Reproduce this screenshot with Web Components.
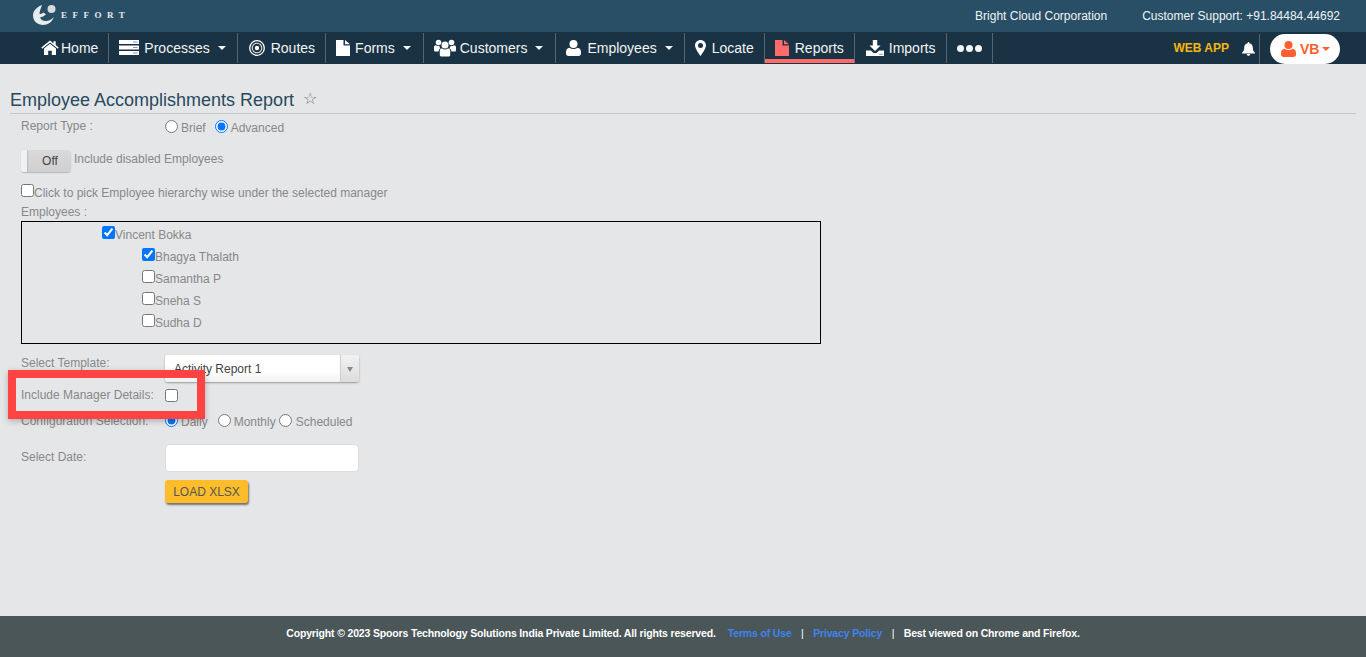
<!DOCTYPE html>
<html>
<head>
<meta charset="utf-8">
<title>Employee Accomplishments Report</title>
<style>
  html, body { margin: 0; height: 100%; }
  body { font-family: "Liberation Sans", Arial, sans-serif; background: #e5e6e8; }
  effort-app { height: 657px; }
</style>
</head>
<body>
<effort-app></effort-app>

<script>
const ICONS = {
  home: '<svg width="18" height="15" viewBox="0 0 18 15"><path fill="#fff" d="M9 0.5 0.3 7.6l.9 1.1L9 2.4l7.8 6.3.9-1.1-3-2.5V1.2h-2.2v2.3z"/><path fill="#fff" d="M3 8.6 9 3.8l6 4.8V15h-4.2v-4.3H7.2V15H3z"/></svg>',
  processes: '<svg width="20" height="15" viewBox="0 0 20 15"><path fill="#fff" d="M0 0h20v4H0zM0 5.5h20v4H0zM0 11h20v4H0z"/><path fill="#8a9aa5" d="M14 1.5h4.500v1H14zM14 7h4.500v1H14zM14 12.500h4.500v1H14z"/></svg>',
  routes: '<svg width="16" height="16" viewBox="0 0 16 16"><g fill="none" stroke="#fff"><circle cx="8" cy="8" r="7.300" stroke-width="1.300"/><circle cx="8" cy="8" r="4.800" stroke-width="1.100" stroke-opacity=".85"/></g><circle cx="8" cy="8" r="2.200" fill="#fff"/></svg>',
  file: c => `<svg width="14" height="16" viewBox="0 0 14 16"><path fill="${c}" d="M0 0h7.500v5.500H14V16H0zM9 0l5 4.200H9z"/></svg>`,
  customers: '<svg width="22" height="18" viewBox="0 0 22 18"><g fill="#fff"><circle cx="11" cy="6" r="3.500"/><path d="M5.800 11.500c0-1.500 1.300-2 2.300-2 1.700 1.300 4.100 1.300 5.800 0 1 0 2.300.5 2.300 2V16c0 1-1 1.500-2 1.500H7.800c-1 0-2-.5-2-1.500z"/><circle cx="4.500" cy="3.500" r="2.800"/><circle cx="17.500" cy="3.500" r="2.800"/><path d="M0 8c0-1 1-1.700 2-1.800 1.200.9 2.400 1 3.500.7C5.400 8 6 9 6.700 9.300 5.200 10 4.600 11 4.600 12.500H1.500C.6 12.500 0 12 0 11.200zM22 8c0-1-1-1.700-2-1.800-1.200.9-2.400 1-3.500.7-.1 1.100-.7 2.100-1.400 2.400 1.500.7 2.300 1.700 2.300 3.200h3.100c.9 0 1.500-.5 1.500-1.300z"/></g></svg>',
  user: c => `<svg width="15" height="16" viewBox="0 0 15 16"><g fill="${c}"><circle cx="7.500" cy="4" r="4"/><path d="M0 12c0-2.500 1.500-4 3.300-4.200 2.500 1.700 5.900 1.700 8.400 0C13.500 8 15 9.500 15 12v1.500c0 1.500-1 2.500-2.500 2.500h-10C1 16 0 15 0 13.500z"/></g></svg>`,
  marker: '<svg width="11" height="16" viewBox="0 0 11 16"><path fill="#fff" fill-rule="evenodd" d="M5.500 0C2.400 0 0 2.400 0 5.500c0 2.600 3.500 7.800 5.500 10.500C7.500 13.300 11 8.100 11 5.500 11 2.400 8.600 0 5.500 0zm0 3a2.500 2.500 0 1 1 0 5 2.500 2.500 0 0 1 0-5z"/></svg>',
  download: '<svg width="18" height="16" viewBox="0 0 18 16"><path fill="#fff" d="M6.800 0h4.400v5.500h3.300L9 11 3.500 5.500h3.300z"/><path fill="#fff" d="M0 10.500h4.800L7.500 13h3l2.700-2.500H18V16H0z"/><path fill="#1a3344" d="M13.500 13.800h1v1h-1zM15.500 13.800h1v1h-1z"/></svg>',
  bell: '<svg width="13" height="14" viewBox="0 0 13 14"><path fill="#fff" d="M6.500 0c.5 0 .8.300.8.800v.5c2.200.4 3.500 2 3.500 4.200 0 2.700.7 3.900 2.200 5.300v.7H0v-.7c1.500-1.400 2.200-2.600 2.200-5.300 0-2.200 1.300-3.800 3.500-4.200V.8c0-.5.300-.8.800-.8zM4.800 12h3.400c0 1.100-.7 1.800-1.700 1.800S4.800 13.100 4.800 12z"/></svg>'
};

// top strip with the logo and the company details
class EffortTopbar extends HTMLElement {
  constructor() {
    super();
    this.attachShadow({ mode: 'open' });
    this.shadowRoot.innerHTML = `
      <style>
        :host { display: flex; align-items: center; height: 32px; background: #284f66; color: #f0f3f5; font-size: 12px; padding: 0 26px 0 33px; }
        .logo { display: flex; align-items: center; gap: 5px; margin-top: -3px; }
        .word { font: bold 9px "Liberation Serif", serif; letter-spacing: 5.5px; color: #e6ebee; margin-top: 1px; }
        .org { margin-left: auto; }
        .support { margin-left: 35px; }
      </style>
      <div class="logo">
        <svg width="23" height="22" viewBox="0 0 23 22">
          <circle cx="18.500" cy="5" r="4" fill="#d5dcdf"/>
          <path fill="#e6ebee" d="M9 1C4 3 0 6.500 0 11.500 0 17.500 5 21 10 21c5 0 9-3 11-8-3 3-6 4.500-9 4-3-.5-4.500-2-5-3.500 2-.5 4-1.500 6-3l-2.500-2C9 9.500 7.500 10 6.500 10 6.500 7 8 4 9 1z"/>
        </svg>
        <span class="word">EFFORT</span>
      </div>
      <span class="org">Bright Cloud Corporation</span>
      <span class="support">Customer Support: +91.84484.44692</span>`;
  }
}

// one cell of the dark menu, icon and caret are optional
class NavItem extends HTMLElement {
  constructor() {
    super();
    this.attachShadow({ mode: 'open' });
  }
  connectedCallback() {
    const iconKey = this.getAttribute('icon');
    const active = this.hasAttribute('active');
    let icon = ICONS[iconKey] || '';
    if (typeof icon === 'function') icon = icon(active ? '#ff6b6b' : '#fff');
    const gap = this.getAttribute('gap') || '6';
    this.shadowRoot.innerHTML = `
      <style>
        :host { display: flex; align-items: center; height: 30px; margin-top: 1px; padding: 0 10px 1px 10px; box-sizing: border-box; border-right: 1px solid #56666f; color: #f2f4f5; font-size: 14px; white-space: nowrap; }
        :host([active]) { border-bottom: 4px solid #ff6b6b; padding-top: 3px; padding-bottom: 0; }
        .icon { display: flex; margin-right: ${gap}px; }
        .caret { width: 0; height: 0; border: 4px solid transparent; border-top-color: #f2f4f5; border-bottom: 0; margin-left: 8px; margin-right: 1px; }
      </style>
      <span class="icon">${icon}</span><slot></slot>${this.hasAttribute('caret') ? '<span class="caret"></span>' : ''}`;
  }
}

class EffortNav extends HTMLElement {
  constructor() {
    super();
    this.attachShadow({ mode: 'open' });
    this.shadowRoot.innerHTML = `
      <style>
        :host { display: flex; height: 32px; background: #1a3344; padding-left: 31px; box-sizing: border-box; }
        .right { margin-left: auto; display: flex; align-items: center; padding-right: 26px; }
        .web { font-size: 12px; font-weight: bold; color: #f5b70f; margin-right: 13px; }
        .bell { display: flex; padding-right: 4px; border-right: 1px solid #56666f; height: 30px; margin-top: 1px; align-items: center; box-sizing: border-box; margin-right: 10px; }
        .me { display: flex; align-items: center; width: 70px; height: 30px; margin-top: 1px; background: #fff; border-radius: 15px; padding-left: 11px; box-sizing: border-box; color: #ff5f2e; font-size: 14px; font-weight: bold; }
        .me svg { margin-right: 4px; }
        .caret { width: 0; height: 0; border: 4px solid transparent; border-top-color: #ff5f2e; border-bottom: 0; margin-left: 3px; }
      </style>
      <slot></slot>
      <div class="right">
        <span class="web">WEB APP</span>
        <span class="bell">${ICONS.bell}</span>
        <span class="me">${ICONS.user('#ff5f2e')}VB<span class="caret"></span></span>
      </div>`;
  }
}

// label on the left, control on the right
class FormRow extends HTMLElement {
  constructor() {
    super();
    this.attachShadow({ mode: 'open' });
    this.shadowRoot.innerHTML = `
      <style>
        :host { display: flex; align-items: flex-start; margin-left: 21px; font-size: 12px; color: #888; }
        .label { width: 144px; flex: none; }
      </style>
      <span class="label"><slot name="label"></slot></span><slot></slot>`;
  }
}

class ToggleSwitch extends HTMLElement {
  constructor() {
    super();
    this.attachShadow({ mode: 'open' });
    this.shadowRoot.innerHTML = `
      <style>
        :host { display: flex; align-items: center; width: 50px; height: 22px; border-radius: 3px; background: linear-gradient(#d9d9d9, #d0d0d0); box-shadow: 0 1px 1px rgba(0,0,0,.2); font-size: 12px; color: #444; box-sizing: border-box; }
        .knob { width: 6px; height: 22px; background: #f1f1f1; border-radius: 3px 0 0 3px; box-shadow: 1px 0 1px rgba(0,0,0,.12); }
        .txt { flex: 1; text-align: center; padding-left: 2px; }
      </style>
      <span class="knob"></span><span class="txt">Off</span>`;
  }
}

class TreeCheck extends HTMLElement {
  constructor() {
    super();
    this.attachShadow({ mode: 'open' });
    const checked = this.hasAttribute('checked') ? 'checked' : '';
    this.shadowRoot.innerHTML = `
      <style>
        :host { display: flex; align-items: flex-start; height: 22px; font-size: 12px; color: #888; }
        input { margin: 0; width: 13px; height: 13px; }
        span { padding-top: 2px; }
      </style>
      <input type="checkbox" ${checked}><span><slot></slot></span>`;
  }
}

class SelectBox extends HTMLElement {
  constructor() {
    super();
    this.attachShadow({ mode: 'open' });
    this.shadowRoot.innerHTML = `
      <style>
        :host { display: flex; width: 194px; height: 27px; border-radius: 3px; background: linear-gradient(#fff 60%, #f1f1f1); box-shadow: 0 1px 2px rgba(0,0,0,.35); font-size: 12px; color: #444; box-sizing: border-box; }
        .val { flex: 1; padding: 7px 0 0 9px; }
        .arrow { width: 18px; border-left: 1px solid #ccc; background: linear-gradient(#f2f2f2, #dcdcdc); border-radius: 0 3px 3px 0; display: flex; align-items: center; justify-content: center; }
        .arrow i { width: 0; height: 0; border: 3px solid transparent; border-top: 5px solid #888; border-bottom: 0; margin-top: 2px; }
      </style>
      <span class="val"><slot></slot></span><span class="arrow"><i></i></span>`;
  }
}

class LoadButton extends HTMLElement {
  constructor() {
    super();
    this.attachShadow({ mode: 'open' });
    this.shadowRoot.innerHTML = `
      <style>
        :host { display: inline-flex; align-items: center; justify-content: center; width: 83px; height: 23px; background: #fdbd2a; border-radius: 3px; box-shadow: 1px 2px 2px rgba(0,0,0,.5); color: #555; font-size: 12px; }
      </style>
      <slot></slot>`;
  }
}

class ReportForm extends HTMLElement {
  constructor() {
    super();
    this.attachShadow({ mode: 'open' });
    this.shadowRoot.innerHTML = `
      <style>
        :host { display: block; position: relative; flex: 1; font-size: 12px; color: #888; }
        h1 { margin: 26px 10px 0; height: 23px; font: 18px/21px "Liberation Sans", sans-serif; color: #28495c; border-bottom: 1px solid #c9c6c6; display: flex; }
        .star { margin: -2px 0 0 9px; font-size: 16px; color: #777; }
        input[type=radio], input[type=checkbox] { margin: 0; width: 13px; height: 13px; }
        .opt { display: inline-flex; align-items: flex-start; margin-right: 9px; }
        .opt span { padding: 1px 0 0 3px; }
        .inline { display: flex; align-items: flex-start; }
        .tog { margin: 13px 0 0 21px; display: flex; align-items: center; gap: 3px; height: 22px; padding-bottom: 2px; }
        .tog > span { padding-bottom: 4px; }
        .pick { margin: 10px 0 0 21px; height: 15px; }
        .pick span { padding-top: 2px; }
        .emp { margin: 6px 0 0 21px; height: 15px; }
        .tree { margin: 1px 0 0 21px; width: 800px; height: 123px; box-sizing: border-box; border: 1px solid #000; padding: 4px 0 0 80px; }
        .kids { margin-left: 40px; }
        .date { width: 194px; height: 28px; box-sizing: border-box; background: #fff; border: 1px solid #dcdcdc; border-radius: 4px; }
        .mark { position: absolute; left: 8px; top: 306px; width: 197px; height: 49px; box-sizing: border-box; border: 8px solid #ff4343; box-shadow: 0 2px 6px rgba(0,0,0,.25); }
      </style>
      <h1>Employee Accomplishments Report<span class="star">☆</span></h1>
      <form-row style="margin-top:6px;height:17px"><span slot="label" style="display:block;margin-top:-1px">Report Type :</span>
        <div class="inline"><label class="opt"><input type="radio" name="rt"><span>Brief</span></label><label class="opt"><input type="radio" name="rt" checked><span>Advanced</span></label></div>
      </form-row>
      <div class="tog"><toggle-switch></toggle-switch><span>Include disabled Employees</span></div>
      <div class="pick inline"><input type="checkbox"><span>Click to pick Employee hierarchy wise under the selected manager</span></div>
      <div class="emp">Employees :</div>
      <div class="tree">
        <tree-check checked>Vincent Bokka</tree-check>
        <div class="kids">
          <tree-check checked>Bhagya Thalath</tree-check>
          <tree-check>Samantha P</tree-check>
          <tree-check>Sneha S</tree-check>
          <tree-check>Sudha D</tree-check>
        </div>
      </div>
      <form-row style="margin-top:11px;height:27px"><span slot="label" style="display:block;padding-top:1px">Select Template:</span><select-box>Activity Report 1</select-box></form-row>
      <form-row style="margin-top:6px;height:22px"><span slot="label">Include Manager Details:</span><input type="checkbox" style="margin:0;width:13px;height:13px;margin-top:1px"></form-row>
      <form-row style="margin-top:4px;height:23px"><span slot="label">Configuration Selection:</span>
        <div class="inline"><label class="opt" style="margin-right:10px"><input type="radio" name="cs" checked><span>Daily</span></label><label class="opt" style="margin-right:3px"><input type="radio" name="cs"><span>Monthly</span></label><label class="opt"><input type="radio" name="cs"><span style="padding-left:4px">Scheduled</span></label></div>
      </form-row>
      <form-row style="margin-top:7px;height:28px"><span slot="label" style="display:block;padding-top:6px">Select Date:</span><div class="date"></div></form-row>
      <form-row style="margin-top:8px"><span slot="label"></span><load-button>LOAD XLSX</load-button></form-row>
      <div class="mark"></div>`;
  }
}

class EffortFooter extends HTMLElement {
  constructor() {
    super();
    this.attachShadow({ mode: 'open' });
    this.shadowRoot.innerHTML = `
      <style>
        :host { display: flex; justify-content: center; align-items: center; height: 41px; padding-bottom: 8px; box-sizing: border-box; background: #4a5657; color: #fff; font-size: 10.500px; letter-spacing: -0.16px; font-weight: bold; white-space: nowrap; }
        a { color: #3f83f0; text-decoration: none; }
        .s { margin: 0 9.500px; font-weight: normal; }
        .lk { margin-left: 12px; }
      </style>
      <span>Copyright © 2023 Spoors Technology Solutions India Private Limited. All rights reserved.</span>
      <a class="lk" href="#">Terms of Use</a><span class="s">|</span><a href="#">Privacy Policy</a><span class="s">|</span><span>Best viewed on Chrome and Firefox.</span>`;
  }
}

class EffortApp extends HTMLElement {
  constructor() {
    super();
    this.attachShadow({ mode: 'open' });
    this.shadowRoot.innerHTML = `
      <style>
        :host { display: flex; flex-direction: column; font-family: "Liberation Sans", Arial, sans-serif; }
        .dots { display: flex; gap: 2px; margin-top: 1px; }
        .dots i { width: 7px; height: 7px; border-radius: 50%; background: #f2f4f5; }
      </style>
      <effort-topbar></effort-topbar>
      <effort-nav>
        <nav-item icon="home" gap="2">Home</nav-item>
        <nav-item icon="processes" gap="5" caret>Processes</nav-item>
        <nav-item icon="routes" style="padding-left:11px">Routes</nav-item>
        <nav-item icon="file" gap="5" style="padding-right:11px" caret>Forms</nav-item>
        <nav-item icon="customers" gap="4" style="padding-right:11px" caret>Customers</nav-item>
        <nav-item icon="user" caret>Employees</nav-item>
        <nav-item icon="marker">Locate</nav-item>
        <nav-item icon="file" active>Reports</nav-item>
        <nav-item icon="download" gap="5" style="padding-left:11px;padding-right:11px">Imports</nav-item>
        <nav-item gap="0"><span class="dots"><i></i><i></i><i></i></span></nav-item>
      </effort-nav>
      <report-form></report-form>
      <effort-footer></effort-footer>`;
  }
}

customElements.define('effort-topbar', EffortTopbar);
customElements.define('nav-item', NavItem);
customElements.define('effort-nav', EffortNav);
customElements.define('form-row', FormRow);
customElements.define('toggle-switch', ToggleSwitch);
customElements.define('tree-check', TreeCheck);
customElements.define('select-box', SelectBox);
customElements.define('load-button', LoadButton);
customElements.define('report-form', ReportForm);
customElements.define('effort-footer', EffortFooter);
customElements.define('effort-app', EffortApp);
</script>
</body>
</html>
